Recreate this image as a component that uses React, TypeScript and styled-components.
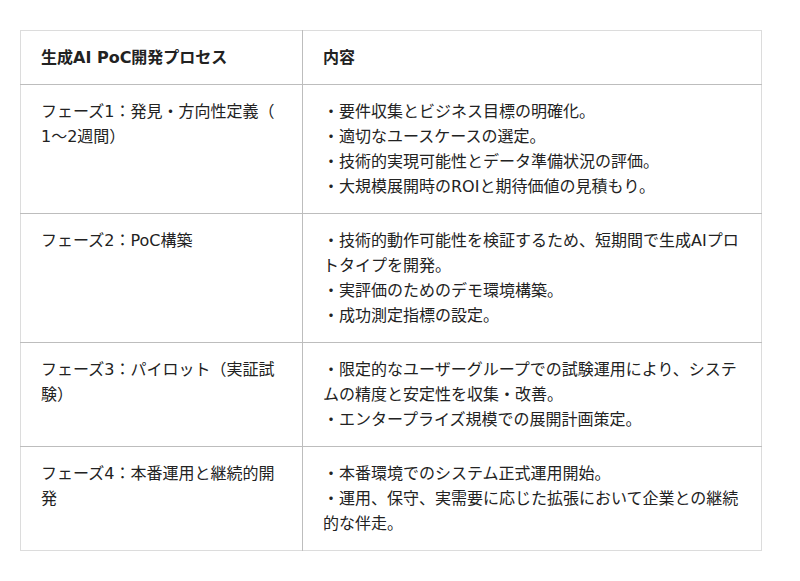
import React from 'react';
import styled, { createGlobalStyle } from 'styled-components';

const GlobalStyle = createGlobalStyle`
  body {
    margin: 0;
    background: #fff;
    font-family: "DejaVu Sans", "Noto Sans CJK JP", sans-serif;
    color: #222;
  }
`;

const Page = styled.div`
  padding: 30px 20px 0 20px;
`;

const Table = styled.table`
  width: 742px;
  border-collapse: collapse;
  border: 1px solid #dcdcdc;
  font-size: 16px;
  line-height: 25px;
  table-layout: fixed;
`;

const HeadCell = styled.th<{ $first?: boolean }>`
  text-align: left;
  font-weight: bold;
  padding: 14px 20px;
  width: ${(p) => (p.$first ? '241px' : 'auto')};
  border-bottom: 1px solid #bdbdbd;
  border-right: ${(p) => (p.$first ? '1px solid #bdbdbd' : 'none')};
  vertical-align: top;
`;

const Cell = styled.td<{ $first?: boolean; $last?: boolean }>`
  padding: 14px 20px;
  vertical-align: top;
  line-break: ${(p) => (p.$first ? 'anywhere' : 'auto')};
  border-bottom: ${(p) => (p.$last ? 'none' : '1px solid #bdbdbd')};
  border-right: ${(p) => (p.$first ? '1px solid #bdbdbd' : 'none')};
`;

interface Phase {
  name: string;
  items: string[];
}

const phases: Phase[] = [
  {
    name: 'フェーズ1：発見・方向性定義（1〜2週間）',
    items: [
      '・要件収集とビジネス目標の明確化。',
      '・適切なユースケースの選定。',
      '・技術的実現可能性とデータ準備状況の評価。',
      '・大規模展開時のROIと期待価値の見積もり。',
    ],
  },
  {
    name: 'フェーズ2：PoC構築',
    items: [
      '・技術的動作可能性を検証するため、短期間で生成AIプロトタイプを開発。',
      '・実評価のためのデモ環境構築。',
      '・成功測定指標の設定。',
    ],
  },
  {
    name: 'フェーズ3：パイロット（実証試験）',
    items: [
      '・限定的なユーザーグループでの試験運用により、システムの精度と安定性を収集・改善。',
      '・エンタープライズ規模での展開計画策定。',
    ],
  },
  {
    name: 'フェーズ4：本番運用と継続的開発',
    items: [
      '・本番環境でのシステム正式運用開始。',
      '・運用、保守、実需要に応じた拡張において企業との継続的な伴走。',
    ],
  },
];

const App: React.FC = () => (
  <Page>
    <GlobalStyle />
    <Table>
      <thead>
        <tr>
          <HeadCell $first>生成AI PoC開発プロセス</HeadCell>
          <HeadCell>内容</HeadCell>
        </tr>
      </thead>
      <tbody>
        {phases.map((phase, i) => {
          const last = i === phases.length - 1;
          return (
            <tr key={phase.name}>
              <Cell $first $last={last}>{phase.name}</Cell>
              <Cell $last={last}>
                {phase.items.map((item) => (
                  <div key={item}>{item}</div>
                ))}
              </Cell>
            </tr>
          );
        })}
      </tbody>
    </Table>
  </Page>
);

export default App;
